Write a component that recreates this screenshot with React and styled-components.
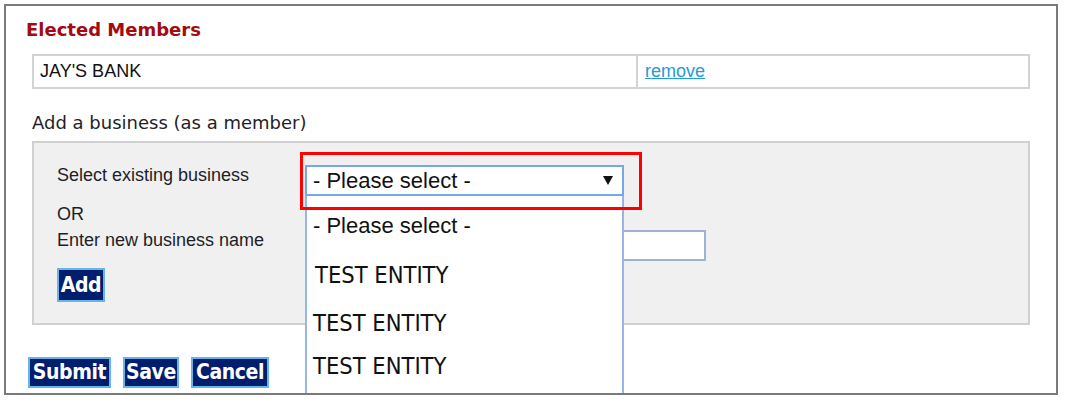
import React from "react";
import styled, { createGlobalStyle } from "styled-components";

const Global = createGlobalStyle`
  html, body { margin: 0; padding: 0; background: #fff; }
  body { width: 1066px; height: 404px; overflow: hidden; }
`;

const SANS = `"Liberation Sans", Arial, sans-serif`;
const VERDANA = `"DejaVu Sans", Verdana, sans-serif`;
const CONDENSED = `"DejaVu Sans Condensed", "DejaVu Sans", sans-serif`;

const Frame = styled.div`
  position: relative;
  box-sizing: border-box;
  margin: 4px 0 0 4px;
  width: 1054px;
  height: 391px;
  border: 2px solid #7a7a7a;
  background: #fff;
  padding: 13px 26px 0 20px;
  display: flex;
  flex-direction: column;
`;

const Title = styled.h2`
  margin: 0;
  font: bold 18px/21px ${VERDANA};
  color: #a30b10;
`;

const MemberTable = styled.div`
  margin: 14px 0 0 6px;
  display: grid;
  grid-template-columns: 602px 1fr;
  height: 35px;
  box-sizing: border-box;
  border: 2px solid #d3d3d3;
`;

const Cell = styled.div`
  display: flex;
  align-items: center;
  padding-left: ${(p) => p.$pad}px;
  border-left: ${(p) => (p.$divider ? "2px solid #d3d3d3" : "none")};
  font: 18px ${SANS};
  color: #111;
`;

const RemoveLink = styled.a`
  color: #1f9bd7;
  text-decoration: underline;
  cursor: pointer;
`;

const SectionLabel = styled.div`
  margin: 23px 0 0 6px;
  font: 18px/21px ${VERDANA};
  color: #1e1e28;
`;

const Panel = styled.div`
  margin: 8px 0 0 6px;
  box-sizing: border-box;
  height: 184px;
  border: 2px solid #d0d0d0;
  background: #f0f0f0;
  padding: 22px 0 0 23px;
  display: grid;
  grid-template-columns: 248px auto;
  align-content: start;
  justify-items: start;
  align-items: start;
`;

const FieldLabel = styled.div`
  margin-top: ${(p) => p.$mt || 0}px;
  font: 18px/${(p) => p.$lh}px ${SANS};
  color: #1e1e28;
`;

const SelectWrap = styled.div`
  position: relative;
  width: 319px;
  height: 31px;
`;

const SelectBox = styled.div`
  box-sizing: border-box;
  height: 31px;
  display: flex;
  align-items: center;
  justify-content: space-between;
  padding: 0 9px 0 6px;
  border: 2px solid #78a6e8;
  background: #fff;
  font: 22px ${SANS};
  color: #111;
`;

const Highlight = styled.div`
  position: absolute;
  left: -5px;
  top: -13px;
  width: 342px;
  height: 58px;
  box-sizing: border-box;
  border: 3px solid #ff0000;
  z-index: 3;
  pointer-events: none;
`;

const OptionList = styled.div`
  position: absolute;
  left: 0;
  top: 100%;
  width: 319px;
  height: 197px;
  box-sizing: border-box;
  border-left: 2px solid #97b6e6;
  border-right: 2px solid #97b6e6;
  background: #fff;
  z-index: 2;
  overflow: hidden;
`;

const Option = styled.div`
  margin-top: ${(p) => p.$mt}px;
  padding-left: ${(p) => p.$indent}px;
  font-family: ${(p) => (p.$placeholder ? SANS : CONDENSED)};
  font-size: ${(p) => (p.$placeholder ? 22 : 23.5)}px;
  font-stretch: ${(p) => (p.$placeholder ? "normal" : "condensed")};
  line-height: 1;
  color: #111;
  white-space: nowrap;
`;

const TextInput = styled.input`
  margin-top: 34px;
  box-sizing: border-box;
  width: 401px;
  height: 31px;
  border: 2px solid #9fb2d0;
  background: #fff;
  outline: none;
`;

const NavyButton = styled.button`
  box-sizing: border-box;
  width: ${(p) => p.$w}px;
  height: ${(p) => p.$h}px;
  margin-top: ${(p) => p.$mt || 0}px;
  padding: 0;
  display: flex;
  align-items: center;
  justify-content: center;
  overflow: visible;
  white-space: nowrap;
  background: #001d6e;
  border: 2px solid #63b5ea;
  border-radius: 0;
  color: #fff;
  font-family: ${CONDENSED};
  font-weight: bold;
  font-size: 21px;
  font-stretch: condensed;
  letter-spacing: -0.4px;
  line-height: 1;
  cursor: pointer;
`;

const ButtonRow = styled.div`
  margin: 32px 0 0 2px;
  display: flex;
  gap: 12px;
`;

const Arrow = () => (
  <svg width="10" height="9" viewBox="0 0 10 9" aria-hidden="true">
    <path d="M0 0 H10 L5 9 Z" fill="#111" />
  </svg>
);

export default function App() {
  return (
    <>
      <Global />
      <Frame>
        <Title>Elected Members</Title>
        <MemberTable>
          <Cell $pad={6}>JAY'S BANK</Cell>
          <Cell $pad={7} $divider>
            <RemoveLink>remove</RemoveLink>
          </Cell>
        </MemberTable>
        <SectionLabel>Add a business (as a member)</SectionLabel>
        <Panel>
          <FieldLabel $lh={20}>Select existing business</FieldLabel>
          <SelectWrap>
            <SelectBox>
              <span>- Please select -</span>
              <Arrow />
            </SelectBox>
            <Highlight />
            <OptionList>
              <Option $placeholder $mt={19} $indent={6}>- Please select -</Option>
              <Option $mt={27} $indent={8}>TEST ENTITY</Option>
              <Option $mt={24} $indent={6}>TEST ENTITY</Option>
              <Option $mt={20} $indent={6}>TEST ENTITY</Option>
            </OptionList>
          </SelectWrap>
          <FieldLabel $lh={26} $mt={5}>
            OR
            <br />
            Enter new business name
          </FieldLabel>
          <TextInput type="text" />
          <NavyButton $w={48} $h={34} $mt={7}>Add</NavyButton>
        </Panel>
        <ButtonRow>
          <NavyButton $w={83} $h={31}>Submit</NavyButton>
          <NavyButton $w={56} $h={31}>Save</NavyButton>
          <NavyButton $w={78} $h={31}>Cancel</NavyButton>
        </ButtonRow>
      </Frame>
    </>
  );
}
